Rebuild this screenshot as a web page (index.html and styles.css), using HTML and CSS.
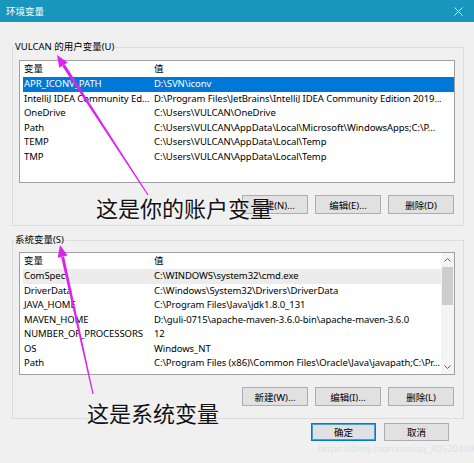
FILE: index.html
```html
<!DOCTYPE html>
<html lang="zh-CN">
<head>
<meta charset="utf-8">
<title>环境变量</title>
<link rel="stylesheet" href="styles.css">
</head>
<body>
<div class="window">
  <div class="titlebar">
    <span class="title">环境变量</span>
    <svg class="close" width="9" height="9" viewBox="0 0 9 9"><path d="M0.5 0.5 L8.5 8.5 M8.5 0.5 L0.5 8.5" stroke="#fff" stroke-width="1"/></svg>
  </div>
  <div class="main">
    <div class="group">
      <div class="group-label">VULCAN 的用户变量(U)</div>
      <div class="list">
        <div class="list-body">
          <div class="row head"><span>变量</span><span>值</span></div>
          <div class="row selected"><span>APR_ICONV_PATH</span><span>D:\SVN\iconv</span></div>
          <div class="row"><span>IntelliJ IDEA Community Ed...</span><span>D:\Program Files\JetBrains\IntelliJ IDEA Community Edition 2019...</span></div>
          <div class="row"><span>OneDrive</span><span>C:\Users\VULCAN\OneDrive</span></div>
          <div class="row"><span>Path</span><span>C:\Users\VULCAN\AppData\Local\Microsoft\WindowsApps;C:\P...</span></div>
          <div class="row"><span>TEMP</span><span>C:\Users\VULCAN\AppData\Local\Temp</span></div>
          <div class="row"><span>TMP</span><span>C:\Users\VULCAN\AppData\Local\Temp</span></div>
        </div>
      </div>
      <div class="buttons">
        <button class="btn">新建(N)...</button>
        <button class="btn">编辑(E)...</button>
        <button class="btn">删除(D)</button>
      </div>
    </div>

    <div class="group group-sys">
      <div class="group-label label-sys">系统变量(S)</div>
      <div class="list list-sys">
        <div class="list-body">
          <div class="row head"><span>变量</span><span>值</span></div>
          <div class="row hover"><span>ComSpec</span><span>C:\WINDOWS\system32\cmd.exe</span></div>
          <div class="row"><span>DriverData</span><span>C:\Windows\System32\Drivers\DriverData</span></div>
          <div class="row"><span>JAVA_HOME</span><span>C:\Program Files\Java\jdk1.8.0_131</span></div>
          <div class="row"><span>MAVEN_HOME</span><span>D:\guli-0715\apache-maven-3.6.0-bin\apache-maven-3.6.0</span></div>
          <div class="row"><span>NUMBER_OF_PROCESSORS</span><span>12</span></div>
          <div class="row"><span>OS</span><span>Windows_NT</span></div>
          <div class="row"><span>Path</span><span>C:\Program Files (x86)\Common Files\Oracle\Java\javapath;C:\Pr...</span></div>
          <div class="row"><span>PATHEXT</span><span>.COM;.EXE;.BAT;.CMD;.VBS;.VBE;.JS;.JSE;.WSF;.WSH;.MSC</span></div>
        </div>
        <div class="scrollbar">
          <svg class="arrow" width="13" height="14" viewBox="0 0 13 14"><path d="M3.5 8.5 L6.5 5.5 L9.5 8.5" fill="none" stroke="#606060" stroke-width="1"/></svg>
          <div class="thumb"></div>
          <div class="track"></div>
          <svg class="arrow" width="13" height="14" viewBox="0 0 13 14"><path d="M3.5 5.5 L6.5 8.5 L9.5 5.5" fill="none" stroke="#606060" stroke-width="1"/></svg>
        </div>
      </div>
      <div class="buttons">
        <button class="btn">新建(W)...</button>
        <button class="btn">编辑(I)...</button>
        <button class="btn">删除(L)</button>
      </div>
    </div>

    <div class="footer">
      <button class="btn btn-default">确定</button>
      <button class="btn">取消</button>
    </div>
  </div>

  <div class="note note-user">这是你的账户变量</div>
  <div class="note note-sys">这是系统变量</div>
  <div class="watermark">https://blog.csdn.net/qq_40520449</div>

  <svg class="arrows" width="474" height="463" viewBox="0 0 474 463">
    <polygon points="148.5,194.7 64.8,64.3 62.2,65.9 147.5,195.3" fill="#dc23ec"/>
    <polygon points="57,55 67.7,62.4 59.3,67.8" fill="#dc23ec"/>
    <polygon points="93.6,393.9 64.1,256.4 61.1,257 92.4,394.1" fill="#dc23ec"/>
    <polygon points="60,245 67.5,255.6 57.7,257.8" fill="#dc23ec"/>
  </svg>
</div>
</body>
</html>
```

FILE: styles.css
```css
* { box-sizing: border-box; }

html, body {
  margin: 0;
  padding: 0;
}

body {
  width: 474px;
  height: 463px;
  overflow: hidden;
  background: #f0f0f0;
  font-family: "Noto Sans", "Noto Sans CJK SC", sans-serif;
  font-size: 9.5px;
  color: #000;
}

.window {
  position: relative;
  width: 474px;
  height: 463px;
  background: #f0f0f0;
}

.titlebar {
  height: 22px;
  background: #1896be;
  display: flex;
  align-items: center;
  justify-content: space-between;
  padding: 0 11px 0 6px;
  color: #fff;
}

.title {
  font-family: "Noto Sans CJK SC", sans-serif;
  font-size: 9.5px;
}

.close { display: block; }

.main {
  padding: 25px 10px 0 12px;
}

.group {
  border: 1px solid #dcdcdc;
  padding: 0 8px 11px 6px;
}

.group-sys {
  margin-top: 14px;
  padding-bottom: 12px;
}

.group-label {
  width: fit-content;
  margin: -8px 0 0 -5px;
  padding: 0 1px;
  line-height: 14px;
  background: #f0f0f0;
  white-space: nowrap;
}

.list {
  margin-top: 6px;
  height: 123px;
  border: 1px solid #a0a0a0;
  background: #fff;
  display: flex;
  overflow: hidden;
}

.list-sys { margin-top: 5px; }

.list-body {
  flex: 1;
  padding-left: 3px;
  overflow: hidden;
  letter-spacing: -0.07px;
}

.row {
  display: grid;
  grid-template-columns: 130px 288px;
  height: 14.5px;
  line-height: 14px;
  white-space: nowrap;
}

.row span {
  overflow: hidden;
  padding-left: 1px;
}

.row.head {
  height: 16px;
  line-height: 16px;
}

.row.selected {
  background: #0078d7;
  color: #fff;
}

.row.hover { background: #ececec; }

.scrollbar {
  width: 13px;
  background: #f4f4f4;
  display: flex;
  flex-direction: column;
}

.arrow { display: block; flex: none; }

.thumb {
  height: 38px;
  margin: 0 1px;
  background: #cdcdcd;
}

.track { flex: 1; }

.buttons {
  display: flex;
  justify-content: flex-end;
  gap: 7px;
  margin-top: 12px;
  padding-right: 1px;
}

.btn {
  width: 66px;
  height: 19px;
  padding: 0;
  border: 1px solid #adadad;
  background: #e1e1e1;
  font-family: "Noto Sans", "Noto Sans CJK SC", sans-serif;
  font-size: 9.5px;
  color: #000;
}

.footer {
  display: flex;
  justify-content: flex-end;
  gap: 8px;
  margin-top: 4px;
  padding-right: 15px;
}

.footer .btn {
  width: 65px;
  height: 18px;
}

.btn-default {
  border-color: #0078d7;
  box-shadow: inset 0 0 0 1px #4a9ee0;
}

.note {
  position: absolute;
  font-family: "Noto Sans CJK SC", sans-serif;
  font-size: 22px;
  line-height: 24px;
  color: #111;
  white-space: nowrap;
  text-shadow: 0 0 2px #fff;
}

.note-user { left: 96px; top: 195px; }
.note-sys { left: 87px; top: 400px; }

.watermark {
  position: absolute;
  left: 318px;
  top: 442px;
  font-size: 9.5px;
  color: #d9e2ec;
  white-space: nowrap;
}

.arrows {
  position: absolute;
  left: 0;
  top: 0;
  pointer-events: none;
}
```
